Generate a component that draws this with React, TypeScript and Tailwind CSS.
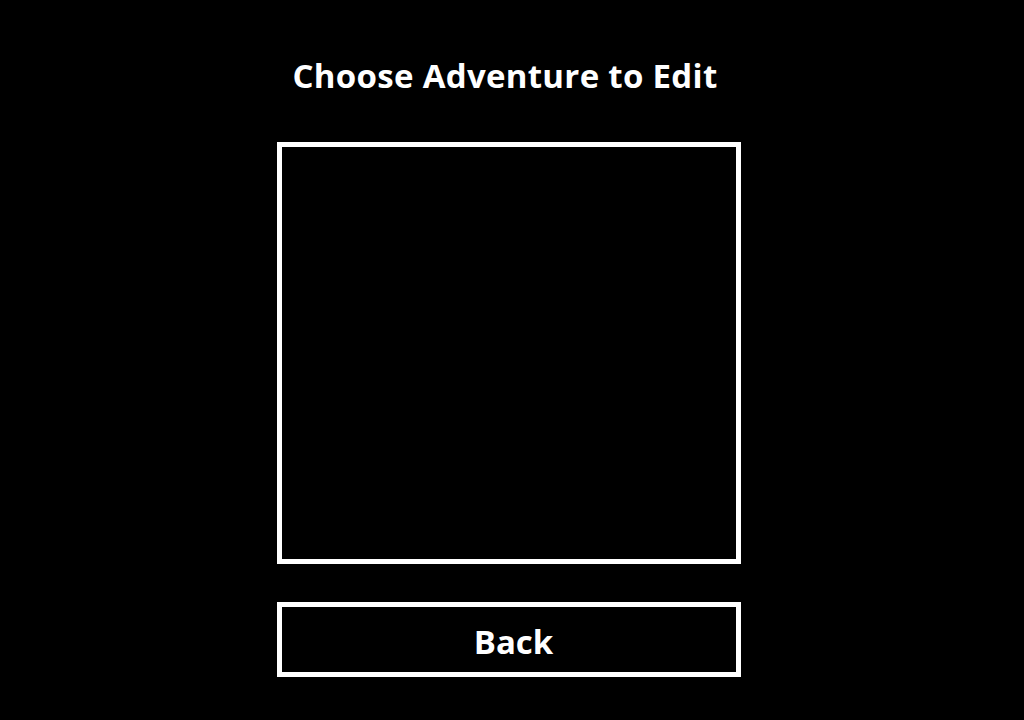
import React from 'react';

export default function App() {
  return (
    <div className="w-[1024px] h-[720px] bg-black flex flex-col items-center font-['Open_Sans',sans-serif] text-white">
      <h1 className="mt-[56px] ml-[-14px] h-[40px] leading-[40px] text-[33px] font-bold tracking-[0.3px]">
        Choose Adventure to Edit
      </h1>
      <div className="mt-[46px] ml-[-6px] w-[464px] h-[422px] border-[5px] border-white"></div>
      <button className="mt-[38px] ml-[-6px] w-[464px] h-[75px] border-[5px] border-white flex items-center justify-center text-[33px] font-bold pl-[9px] pt-[4px]">
        Back
      </button>
    </div>
  );
}
